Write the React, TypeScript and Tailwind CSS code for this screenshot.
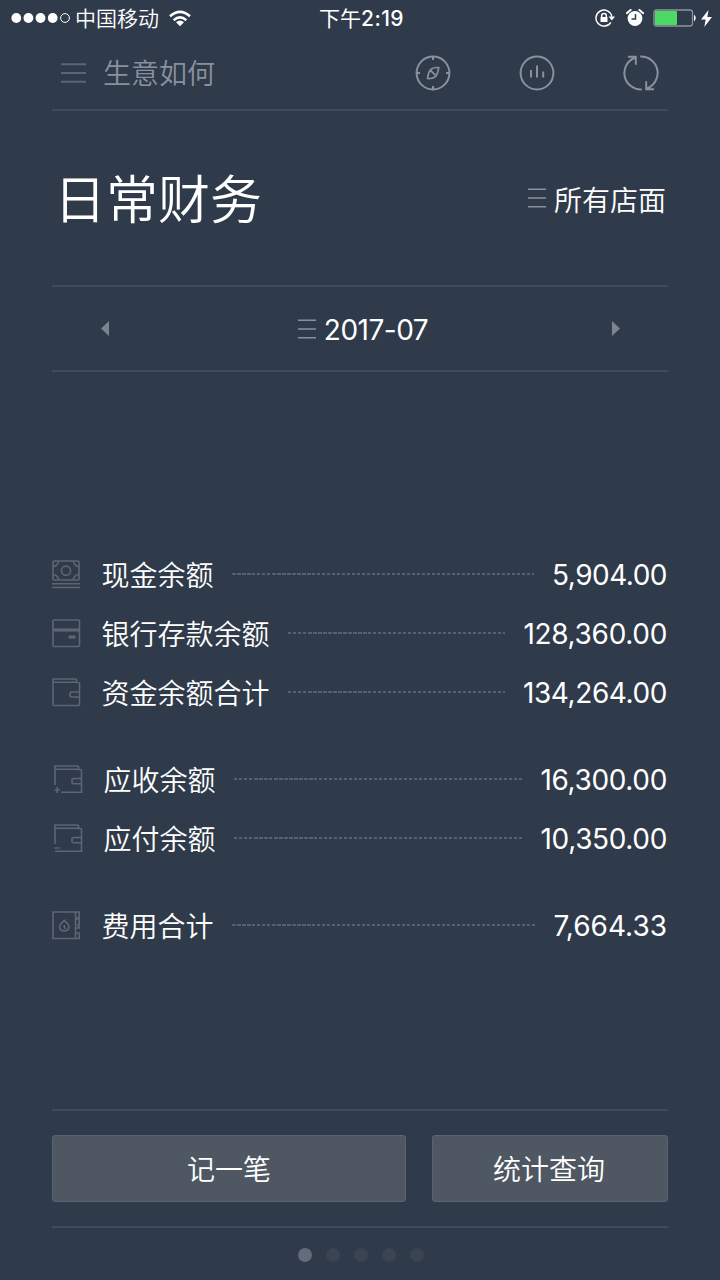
import React from 'react';

type IconProps = { className?: string };

const ROWS: any[][] = [
    [
        { label: '现金余额', value: '5,904.00', icon: 'cash', tracking: 'tracking-[-0.5px]' },
        { label: '银行存款余额', value: '128,360.00', icon: 'card', tracking: 'tracking-[-0.32px]' },
        { label: '资金余额合计', value: '134,264.00', icon: 'wallet', tracking: 'tracking-[-0.42px]' },
    ],
    [
        { label: '应收余额', value: '16,300.00', icon: 'walletPlus', tracking: 'tracking-[-0.35px]', indent: true },
        { label: '应付余额', value: '10,350.00', icon: 'walletMinus', tracking: 'tracking-[-0.35px]', indent: true },
    ],
    [{ label: '费用合计', value: '7,664.33', icon: 'expense', tracking: 'tracking-normal' }],
];

const ICONS: any = {
    cash: (
        <>
            <rect x="1" y="1" width="26" height="19" rx="1" />
            <circle cx="14" cy="10.7" r="4.6" />
            <path d="M1 6.5A5.5 5.5 0 0 0 6.5 1M27 6.5A5.5 5.5 0 0 1 21.5 1M1 14.5A5.5 5.5 0 0 1 6.5 20M27 14.5A5.5 5.5 0 0 0 21.5 20M0 23.7H28M0 27.5H28" />
        </>
    ),
    card: (
        <>
            <rect x="1" y="1" width="26.5" height="26.5" rx="1" />
            <path d="M1 11H27" strokeWidth="3.2" />
            <path d="M16.5 18H23.5" strokeWidth="3" />
        </>
    ),
    wallet: (
        <>
            <path d="M1 4V26.5Q1 27.5 2 27.5H26.5Q27.5 27.5 27.5 26.5V5L24.5 4.2H1V1H23.5Q24.5 1 24.5 2V4.2" />
            <path d="M27.5 14H19.5L18 15V18L19.5 19H27.5" />
        </>
    ),
    walletPlus: (
        <>
            <path d="M1 20V1H23.5Q24.5 1 24.5 2V4.2M1 4.2H24.5L27.5 5V27.2H7" />
            <path d="M27.5 13.5H19.5L18 14.5V17.8L19.5 18.8H27.5M.5 25H6M3.2 22V28" />
        </>
    ),
    walletMinus: (
        <>
            <path d="M1 20V1H23.5Q24.5 1 24.5 2V4.2M1 4.2H24.5L27.5 5V27.2H1" />
            <path d="M27.5 13.5H19.5L18 14.5V17.8L19.5 18.8H27.5M.5 24H5.5" />
        </>
    ),
    expense: (
        <>
            <path d="M23.5 1H1V27.5H23.5ZM23.5 1H27.2V6L25.7 7L27.2 8V13L25.7 14L27.2 15V17H23.5M27.2 8H23.5M23.5 22H27.2V27.5H23.5" />
            <path d="M12.3 9.3Q7.5 13.5 7.5 16.3A4.8 4.2 0 0 0 17 16.3Q17 13.5 12.3 9.3ZM12.3 14V16.5L14 18" />
        </>
    ),
};

const RowIcon: React.FC<{ name: string }> = ({ name }) => (
    <svg viewBox="0 0 29 29" className="w-[29px] h-[29px] text-[#5d6674]" fill="none" stroke="currentColor" strokeWidth="1.6">
        {ICONS[name]}
    </svg>
);

const MenuLines: React.FC<IconProps> = ({ className }) => (
    <svg viewBox="0 0 18 20" className={className} fill="none" stroke="currentColor" strokeWidth="1.6">
        <path d="M0 1.3H18M0 10H18M0 18.7H18" />
    </svg>
);

const StatusBar: React.FC = () => (
    <div className="flex h-9 items-center justify-between pl-[11px] pr-[8px] text-white">
        <div className="flex w-[280px] items-center">
            <svg viewBox="0 0 60 12" className="h-3 w-[60px]" fill="currentColor">
                <circle cx="5.3" cy="6" r="4.9" />
                <circle cx="17.4" cy="6" r="4.9" />
                <circle cx="29.5" cy="6" r="4.9" />
                <circle cx="41.7" cy="6" r="4.9" />
                <circle cx="54" cy="6" r="4.4" fill="none" stroke="currentColor" strokeWidth="1" />
            </svg>
            <span className="ml-[4px] pt-[1px] text-[21px] font-[350] leading-9">中国移动</span>
            <svg viewBox="0 0 22 17" className="ml-[10px] h-[17px] w-[22px]" fill="none" stroke="currentColor" strokeWidth="2.6">
                <path d="M1 6.2Q11-2.6 21 6.2M4.7 10.2Q11 4.6 17.3 10.2" />
                <path d="M11 16.3L7 12.2Q11 9 15 12.2Z" fill="currentColor" stroke="none" />
            </svg>
        </div>
        <span className="pt-[1px] text-[21px] leading-9">
            下午<span className="font-medium tracking-[0.4px]">2:19</span>
        </span>
        <div className="flex w-[280px] items-center justify-end">
            <svg viewBox="0 0 20 18" className="h-[18px] w-5" fill="none" stroke="currentColor" strokeWidth="1.5">
                <path d="M15.8 13.3A8 8 0 1 1 16.8 7.5" />
                <path d="M13.5 7.5H20L16.8 11.5Z" fill="currentColor" stroke="none" />
                <path d="M5.5 8H12.5V13H5.5Z" fill="currentColor" stroke="none" />
                <path d="M6.7 8V6.5Q6.7 4.5 9 4.5T11.3 6.5V8" />
            </svg>
            <svg viewBox="0 0 18 18" className="ml-[11px] h-[18px] w-[18px]">
                <circle cx="9" cy="9.5" r="7.4" fill="currentColor" />
                <path d="M.8 4.2L4.6 1M17.2 4.2L13.4 1" stroke="currentColor" strokeWidth="2" strokeLinecap="round" />
                <path d="M9.5 5V10H5.5" fill="none" stroke="#303b4a" strokeWidth="1.5" />
            </svg>
            <svg viewBox="0 0 44 18" className="ml-[9px] h-[18px] w-11">
                <rect x="1" y="1" width="38.5" height="16" rx="2.5" fill="none" stroke="#8f959e" strokeWidth="1.3" />
                <rect x="2" y="2" width="22" height="14" rx="1" fill="#4cd964" />
                <path d="M41 5.5Q44.5 9 41 12.5Z" fill="currentColor" />
            </svg>
            <svg viewBox="0 0 11 17" className="ml-[4px] h-[17px] w-[11px]" fill="currentColor">
                <path d="M7.5 0L0 9.5H4.7L3.3 17L11 7H6.3Z" />
            </svg>
        </div>
    </div>
);

const Header: React.FC = () => (
    <header className="flex h-[75px] items-center justify-between border-b-2 border-[#414c5a] pl-[9px] pr-[9px] text-[#89919e]">
        <div className="flex items-center">
            <svg viewBox="0 0 25 20" className="h-5 w-[25px] text-[#5b6674]" fill="none" stroke="currentColor" strokeWidth="2">
                <path d="M0 1.2H25M0 10H25M0 18.8H25" />
            </svg>
            <span className="ml-[17px] pt-[2px] text-[28px] font-[350] leading-[40px]">生意如何</span>
        </div>
        <div className="flex gap-[68px]">
            <svg viewBox="0 0 36 36" className="h-9 w-9" fill="none" stroke="currentColor" strokeWidth="2">
                <circle cx="18" cy="18" r="16.4" />
                <path d="M18 1V5M18 31V35M1 18H5M31 18H35" />
                <path d="M23.7 12.7Q22.7 20.5 19.5 22.3T12.5 23.5Q13.5 16 16.5 14T23.7 12.7ZM15.8 15.7L20.2 20.2" strokeWidth="1.7" />
            </svg>
            <svg viewBox="0 0 36 36" className="h-9 w-9" fill="none" stroke="currentColor" strokeWidth="2">
                <circle cx="18" cy="18" r="16.4" />
                <path d="M12 15V22.5M18 10.5V22.5M24.2 16.5V22.5" />
            </svg>
            <svg viewBox="0 0 36 36" className="h-9 w-9" fill="none" stroke="currentColor" strokeWidth="2">
                <path d="M18.8 34.4A16.4 16.4 0 0 1 12.5 2.5M5 1.7H12.8V9.7" />
                <path d="M17.2 1.6A16.4 16.4 0 0 1 23.5 33.5M31 34.3H23.2V26.3" />
            </svg>
        </div>
    </header>
);

const App: React.FC = () => {
    return (
        <div className="flex h-[1280px] w-[720px] flex-col overflow-hidden bg-[#2f3a4a] font-[Inter,'Noto_Sans_CJK_SC',sans-serif]">
            <StatusBar />
            <div className="flex flex-1 flex-col px-[52px]">
                <Header />

                <section className="flex h-[176px] items-center justify-between border-b-2 border-[#414c5a] pr-[2px] text-white">
                    <h1 className="ml-[2px] pt-[6px] text-[52px] font-[350] leading-[72px]">日常财务</h1>
                    <div className="flex items-center">
                        <MenuLines className="h-5 w-[18px] text-[#89919e]" />
                        <span className="ml-[8px] pt-[5px] text-[28px] font-[350] leading-[40px]">所有店面</span>
                    </div>
                </section>

                <section className="flex h-[85px] items-center justify-between border-b-2 border-[#414c5a] pl-[49px] pr-[48px] text-white">
                    <svg viewBox="0 0 8 15" className="h-[15px] w-2 text-[#7b8491]" fill="currentColor">
                        <path d="M8 0V15L0 7.5Z" />
                    </svg>
                    <div className="flex items-center pl-[5px]">
                        <MenuLines className="h-5 w-[18px] text-[#89919e]" />
                        <span className="ml-[8px] pt-[3px] text-[28px] leading-[40px] tracking-[-0.5px]">2017-07</span>
                    </div>
                    <svg viewBox="0 0 8 15" className="h-[15px] w-2 text-[#7b8491]" fill="currentColor">
                        <path d="M0 0V15L8 7.5Z" />
                    </svg>
                </section>

                <main className="flex flex-1 flex-col gap-7 pt-[173px] text-[28px] text-white">
                    {ROWS.map((group, i) => (
                        <div key={i}>
                            {group.map((row) => (
                                <div key={row.label} className={`flex h-[59px] items-center pr-[1px] ${row.indent ? 'pl-[2px]' : ''}`}>
                                    <RowIcon name={row.icon} />
                                    <span className="ml-[20.5px] pt-[2px] font-[350] leading-[40px]">{row.label}</span>
                                    <span className="mx-[18px] mb-[2px] h-[2px] flex-1 bg-[repeating-linear-gradient(90deg,#566170_0_3.5px,transparent_3.5px_5px)]" />
                                    <span className={`pt-[1px] leading-[40px] ${row.tracking}`}>{row.value}</span>
                                </div>
                            ))}
                        </div>
                    ))}
                </main>

                <footer className="flex h-[119px] items-center gap-[26px] border-y-2 border-[#414c5a] text-[28px] font-[350] text-white">
                    <button className="h-[67px] w-[354px] rounded-[3px] border border-[#5a6471] bg-[#4e5762] pt-[2px]">记一笔</button>
                    <button className="h-[67px] flex-1 rounded-[3px] border border-[#5a6471] bg-[#4e5762] pt-[2px] pr-[2px]">统计查询</button>
                </footer>

                <div className="flex h-[52px] items-center justify-center gap-[13.8px] pt-[2px] pl-[2px]">
                    <span className="h-[14px] w-[14px] rounded-full bg-[#646b7a]" />
                    <span className="h-[14px] w-[14px] rounded-full bg-[#3a4453]" />
                    <span className="h-[14px] w-[14px] rounded-full bg-[#3a4453]" />
                    <span className="h-[14px] w-[14px] rounded-full bg-[#3a4453]" />
                    <span className="h-[14px] w-[14px] rounded-full bg-[#3a4453]" />
                </div>
            </div>
        </div>
    );
};

export default App;
